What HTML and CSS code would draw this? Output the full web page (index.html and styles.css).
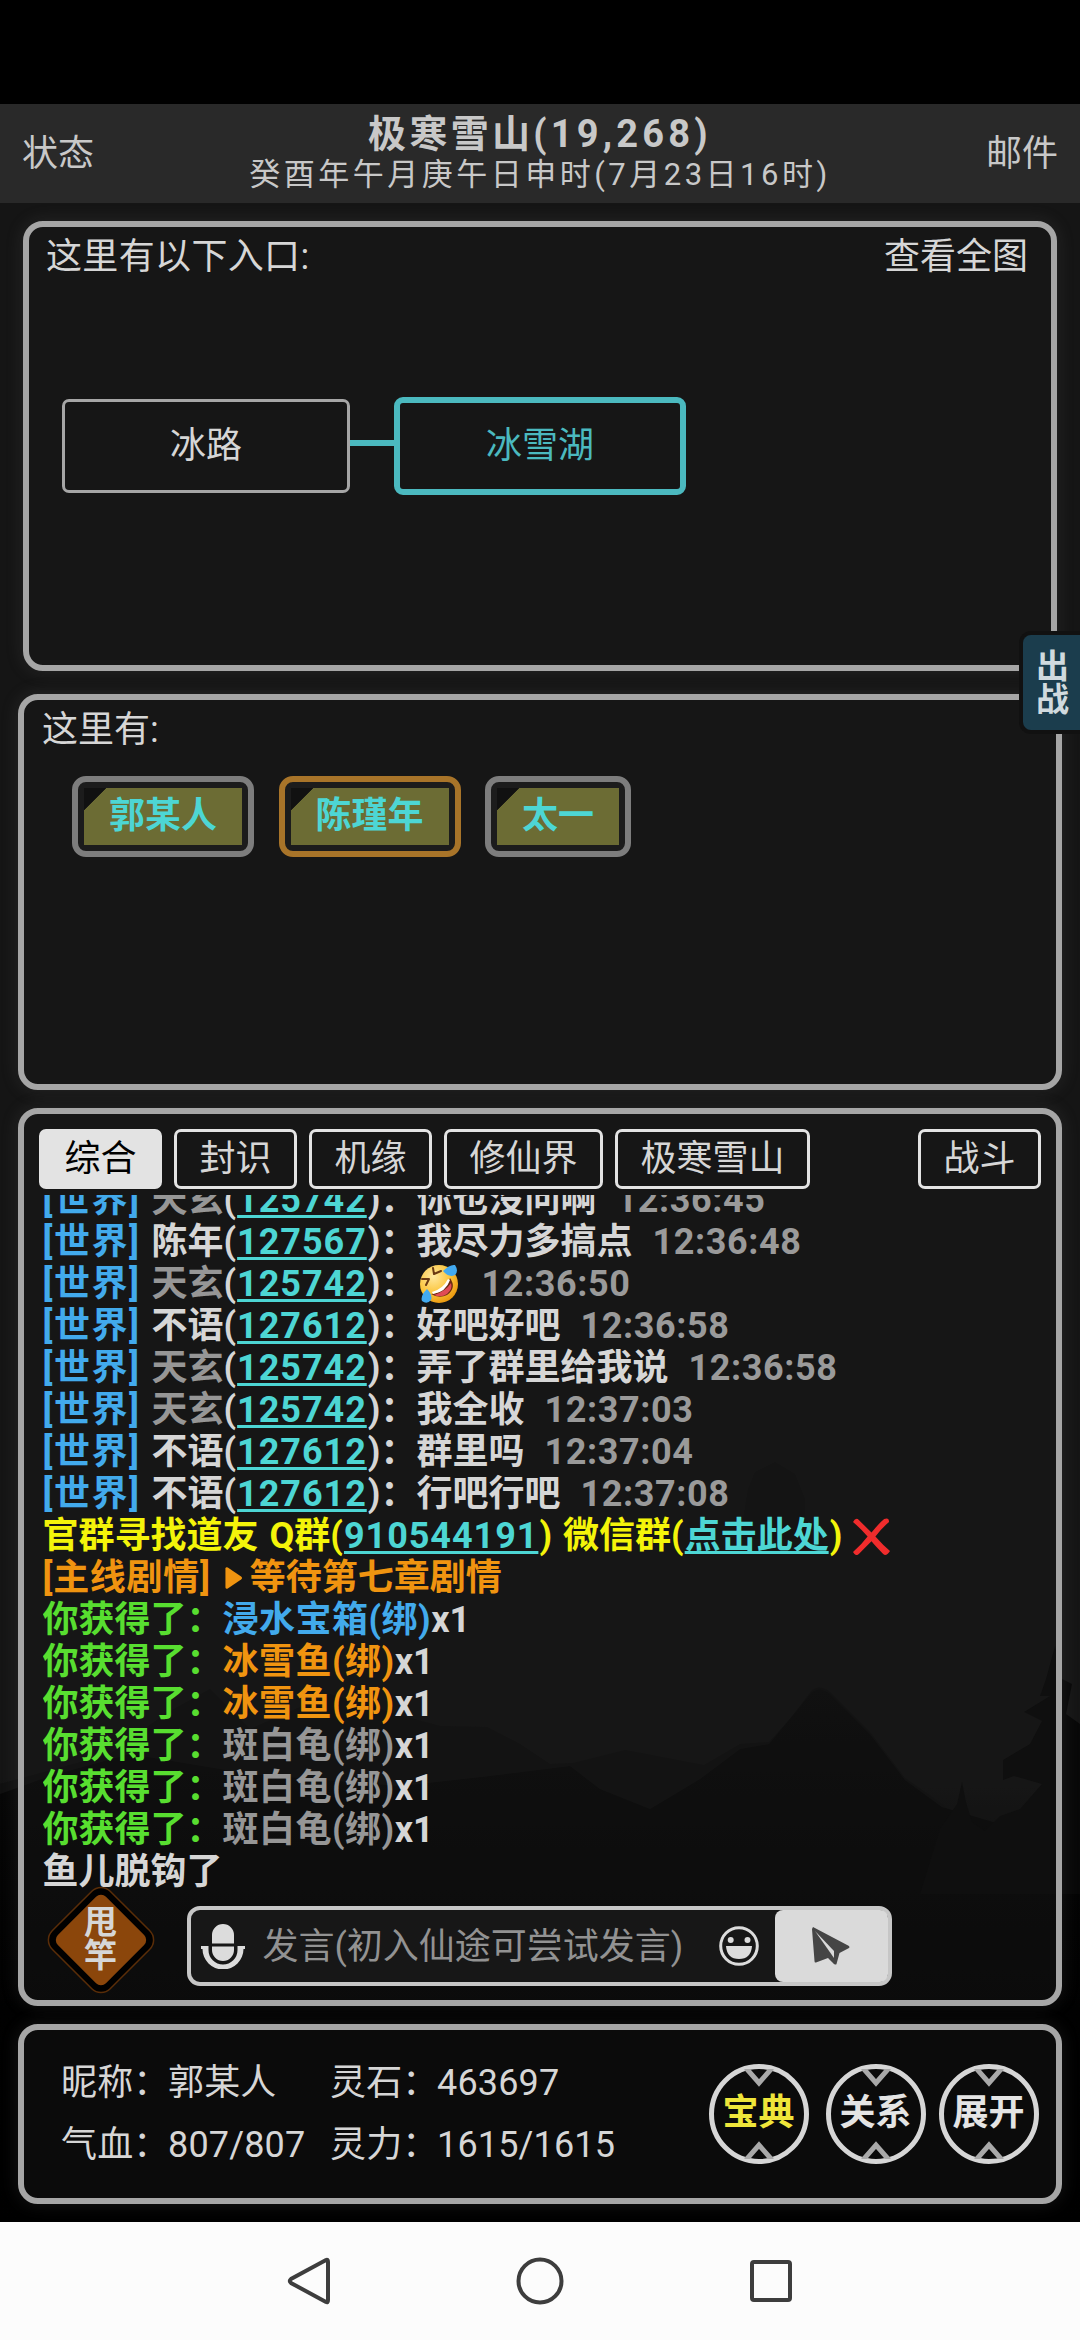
FILE: index.html
```html
<!DOCTYPE html>
<html lang="zh-CN">
<head>
<meta charset="utf-8">
<title>极寒雪山</title>
<link rel="stylesheet" href="styles.css">
</head>
<body>
<svg class="scenery" viewBox="0 0 1080 2118" aria-hidden="true">
  <defs>
    <linearGradient id="sky" x1="0" y1="0" x2="0" y2="1">
      <stop offset="0" stop-color="#151515"/><stop offset=".79" stop-color="#151515"/><stop offset=".86" stop-color="#060606"/><stop offset="1" stop-color="#000"/>
    </linearGradient>
    <linearGradient id="ridge" x1="0" y1="0" x2="0" y2="1">
      <stop offset="0" stop-color="#0b0b0b"/><stop offset=".3" stop-color="#050505"/><stop offset=".6" stop-color="#010101"/><stop offset="1" stop-color="#000"/>
    </linearGradient>
  </defs>
  <rect width="1080" height="2118" fill="url(#sky)"/>
  <path fill="#101010" d="M0 1680 110 1650 165 1610 210 1585 250 1625 330 1590 400 1611 440 1622 487 1623 520 1640 550 1660 573 1659 625 1646 704 1661 740 1640 769 1638 790 1615 812 1586Q820 1580 830 1588L870 1628 905 1674 942 1700 1000 1750 1080 1740V2118H0Z"/>
  <path fill="url(#ridge)" d="M0 1690 50 1672 130 1650 250 1670 400 1682 490 1672 570 1662 600 1685 650 1705 700 1675 740 1645 769 1640 812 1588Q820 1582 830 1590L870 1630 905 1676 942 1703 1000 1720 1080 1700V2118H0Z"/>
  <path fill="#080808" d="M1055 1542 1046 1575 1040 1592 1050 1592 1024 1608 1042 1617 1030 1640 1003 1656V1676L1014 1672 1042 1680 1020 1705 1000 1712 985 1727 972 1718 966 1698 962 1678 957 1700 940 1725 920 1790H1080V1620L1066 1610 1072 1580 1062 1575Z"/>
  <path fill="#121212" d="M740 1435 748 1385 755 1368 775 1358 795 1370 805 1395V1435Z"/>
</svg>
<div class="screen">
  <header class="topbar">
    <span class="topbar-link">状态</span>
    <div class="topbar-center">
      <h1>极寒雪山<span>(19,268)</span></h1>
      <p>癸酉年午月庚午日申时(7月23日16时)</p>
    </div>
    <span class="topbar-link">邮件</span>
  </header>

  <section class="panel panel-map">
    <div class="map-head"><span class="map-title">这里有以下入口:</span><span>查看全图</span></div>
    <div class="map-row">
      <div class="node">冰路</div>
      <div class="edge"></div>
      <div class="node node-current">冰雪湖</div>
    </div>
  </section>

  <section class="panel panel-people">
    <div>这里有:</div>
    <div class="chips">
      <div class="chip"><span>郭某人</span></div>
      <div class="chip chip-gold"><span>陈瑾年</span></div>
      <div class="chip"><span>太一</span></div>
    </div>
  </section>

  <section class="panel panel-chat">
    <nav class="tabs">
      <span class="tab tab-active">综合</span><span class="tab">封识</span><span class="tab">机缘</span><span class="tab">修仙界</span><span class="tab">极寒雪山</span><span class="tab tab-end">战斗</span>
    </nav>
    <div class="log">
      <div class="line"><span class="tag">[世界]</span><span class="gray">天玄</span>(<a>125742</a>)：<span>你也没问啊</span><time>12:36:45</time></div>
      <div class="line"><span class="tag">[世界]</span><span>陈年</span>(<a>127567</a>)：<span>我尽力多搞点</span><time>12:36:48</time></div>
      <div class="line"><span class="tag">[世界]</span><span class="gray">天玄</span>(<a>125742</a>)：<svg class="laugh" viewBox="0 0 40 42"><defs><radialGradient id="face" cx=".35" cy=".3" r=".8"><stop offset="0" stop-color="#ffe9a0"/><stop offset=".55" stop-color="#fbc53c"/><stop offset="1" stop-color="#e89006"/></radialGradient></defs><circle cx="20" cy="21" r="19" fill="url(#face)"/><path fill="#6b2a12" d="M12 31Q26 30 31 15Q38 25 28 32Q20 36 12 31Z"/><path fill="#e04b55" d="M15 32Q27 28 32 20Q34 26 28 31Q22 35 15 32Z"/><path fill="#fff" d="M13 29Q24 26 29 16L31 17Q27 29 14 31Z"/><path fill="none" stroke="#6b3a12" stroke-width="2" stroke-linecap="round" stroke-linejoin="round" d="M14 5 15 11 22 8M3 16 10 16 7 22"/><path fill="#42aaf0" d="M24 8Q31 1 36 2Q40 8 36 12Q30 15 24 8ZM8 26Q1 33 3 38Q8 42 12 37Q14 32 8 26Z"/></svg><time>12:36:50</time></div>
      <div class="line"><span class="tag">[世界]</span><span>不语</span>(<a>127612</a>)：<span>好吧好吧</span><time>12:36:58</time></div>
      <div class="line"><span class="tag">[世界]</span><span class="gray">天玄</span>(<a>125742</a>)：<span>弄了群里给我说</span><time>12:36:58</time></div>
      <div class="line"><span class="tag">[世界]</span><span class="gray">天玄</span>(<a>125742</a>)：<span>我全收</span><time>12:37:03</time></div>
      <div class="line"><span class="tag">[世界]</span><span>不语</span>(<a>127612</a>)：<span>群里吗</span><time>12:37:04</time></div>
      <div class="line"><span class="tag">[世界]</span><span>不语</span>(<a>127612</a>)：<span>行吧行吧</span><time>12:37:08</time></div>
      <div class="line yellow">官群寻找道友<span class="word">Q群</span>(<a>910544191</a>)<span class="word">微信群</span>(<a class="cn">点击此处</a>)<svg class="cross" viewBox="0 0 38 38"><path fill="#f02c2c" d="M0 4Q3-1 6 2Q14 10 19 15Q27 5 32 1Q37-1 37 4Q29 11 23 19Q31 28 38 34Q34 40 31 37Q23 29 19 24Q13 30 6 37Q3 40 0 35Q9 27 15 19Q8 11 0 4Z"/></svg></div>
      <div class="line orange"><span class="story">[主线剧情]</span><svg class="play" viewBox="0 0 20 24"><path d="M1.500 2Q2 0 4 1L18 10.500Q20 12 18 13.500L4 23Q2 24 1.500 22Z"/></svg>等待第七章剧情</div>
      <div class="line"><span class="green">你获得了：</span><span class="item blue">浸水宝箱(绑)</span>x1</div>
      <div class="line"><span class="green">你获得了：</span><span class="item orange">冰雪鱼(绑)</span>x1</div>
      <div class="line"><span class="green">你获得了：</span><span class="item orange">冰雪鱼(绑)</span>x1</div>
      <div class="line"><span class="green">你获得了：</span><span class="item gray">斑白龟(绑)</span>x1</div>
      <div class="line"><span class="green">你获得了：</span><span class="item gray">斑白龟(绑)</span>x1</div>
      <div class="line"><span class="green">你获得了：</span><span class="item gray">斑白龟(绑)</span>x1</div>
      <div class="line">鱼儿脱钩了</div>
    </div>
    <div class="composer">
      <div class="rod">
        <svg viewBox="0 0 112 112"><rect x="15" y="15" width="82" height="82" rx="13" transform="rotate(45 56 56)" class="rod-glow"/><rect x="22" y="22" width="68" height="68" rx="7" transform="rotate(45 56 56)" class="rod-fill"/></svg>
        <span>甩<br>竿</span>
      </div>
      <div class="input">
        <svg class="mic" viewBox="0 0 46 46"><path d="M12 20.500V12a11 11 0 0 1 22 0v8.500ZM12 23.500h22V27a11 11 0 0 1-22 0ZM1 23h7.500v4a14.500 14.500 0 0 0 29 0v-4H45v3h-1.500a20.500 20.500 0 0 1-41 0H1Z"/></svg>
        <span class="placeholder">发言(初入仙途可尝试发言)</span>
        <svg class="smile" viewBox="0 0 40 40"><circle cx="20" cy="20" r="18.300"/><circle class="solid" cx="11.700" cy="14" r="3"/><circle class="solid" cx="28.500" cy="14" r="3"/><path class="solid" d="M7 20H33Q32 33 20 33Q8 33 7 20Z"/></svg>
        <div class="send"><svg viewBox="0 0 38 38"><path d="M1 0 37 19Q38 20.500 37 21L27.500 26 24.500 37Q24 38 22 37L16 31 4 35.500Q2.500 36 2.500 34L0 2Z"/><path class="fold" d="M3 4 22 24 22 31Z"/></svg></div>
      </div>
    </div>
  </section>

  <section class="panel panel-status">
    <div class="stats">
      <span>昵称：</span><span>郭某人</span><span>灵石：</span><span>463697</span>
      <span>气血：</span><span>807/807</span><span>灵力：</span><span>1615/1615</span>
    </div>
    <div class="rounds">
      <div class="round round-yellow"><svg viewBox="0 0 90 90"><path d="M32-1 45 14 58-1M32 91 45 76 58 91"/></svg><span>宝典</span></div>
      <div class="round"><svg viewBox="0 0 90 90"><path d="M32-1 45 14 58-1M32 91 45 76 58 91"/></svg><span>关系</span></div>
      <div class="round"><svg viewBox="0 0 90 90"><path d="M32-1 45 14 58-1M32 91 45 76 58 91"/></svg><span>展开</span></div>
    </div>
  </section>

  <footer class="sysnav">
    <svg viewBox="0 0 44 50"><path d="M39 4Q41 3 41 6V44Q41 47 39 46L4 27Q1.500 25 4 23Z"/></svg>
    <svg viewBox="0 0 50 50"><circle cx="25" cy="25" r="21.500"/></svg>
    <svg viewBox="0 0 44 44"><rect x="3" y="3" width="38" height="38" rx="2"/></svg>
  </footer>
  <div class="battle">出战</div>
</div>
</body>
</html>
```
FILE: styles.css
```css
* { box-sizing: border-box; }
body {
  margin: 0;
  width: 1080px;
  height: 2340px;
  overflow: hidden;
  background: #000;
  color: #d6d6d6;
  font: 36px/42px Roboto, "Noto Sans CJK SC", sans-serif;
  position: relative;
}
svg { display: block; flex: none; }
h1, p { margin: 0; }
.scenery { position: absolute; top: 104px; left: 0; width: 1080px; height: 2118px; }
.screen {
  position: relative;
  height: 2340px;
  padding-top: 104px;
  display: flex;
  flex-direction: column;
  white-space: nowrap;
}
.topbar {
  height: 99px;
  flex: none;
  padding: 0 22px;
  display: flex;
  align-items: center;
  justify-content: space-between;
  background: #292929;
  color: #c8c8c8;
}
.topbar-center { text-align: center; padding-bottom: 1px; }
.topbar h1 { font-size: 38px; line-height: 44px; letter-spacing: 3.3px; }
.topbar h1 span { letter-spacing: 4.2px; }
.topbar p { font-size: 31px; line-height: 38px; letter-spacing: 3.500px; }

.panel {
  border: 6px solid #a6a6a6;
  border-radius: 20px;
  margin: 0 18px;
  flex: none;
  background: rgba(24, 24, 24, .45);
  box-shadow: 0 0 18px rgba(120, 120, 120, .18);
}
.panel-map { height: 450px; margin: 18px 23px 0; padding: 9px 23px 0 17px; }
.map-head { display: flex; justify-content: space-between; }
.map-title { letter-spacing: .35px; }
.map-row { display: flex; align-items: center; margin: 119px 0 0 16px; }
.node {
  width: 288px; height: 94px;
  border: 3.5px solid #a6a6a6;
  border-radius: 7px;
  display: flex; align-items: center; justify-content: center;
}
.edge { width: 44px; height: 6px; margin-top: -6px; background: #4bb9bf; }
.node-current { width: 292px; height: 98px; border: 6px solid #4bb9bf; border-radius: 9px; color: #4bb9bf; }

.panel-people { height: 396px; margin-top: 23px; padding: 9px 18px; }
.chips { display: flex; gap: 24.500px; margin: 25px 0 0 30px; }
.chip { border: 6px solid #7d7d7d; border-radius: 14px; padding: 6px; background: #1c1c1c; }
.chip-gold { border-color: #a87429; }
.chip span {
  display: block;
  height: 57px;
  line-height: 57px;
  padding: 0 25px;
  background: linear-gradient(135deg, #111 15.5px, #6c6c34 16px);
  color: #4dd6d4;
  font-weight: 700;
}

.panel-chat { height: 898px; margin-top: 18px; padding: 15px 15px 0; }
.tabs { display: flex; gap: 12px; }
.tab {
  height: 60px;
  line-height: 55px;
  border: 3px solid #e3e3e3;
  border-radius: 7px;
  padding: 0 22.500px;
}
.tab-active { background: #e3e3e3; color: #000; }
.tab-end { margin-left: auto; }
.log {
  height: 698px;
  margin: 6px 0 0 3.500px;
  overflow: hidden;
  font-weight: 700;
}
.line { height: 42px; display: flex; align-items: center; }
.line:first-child { margin-top: -16px; }
.tag { width: 109px; color: #42aaec; letter-spacing: 1.500px; }
.story { letter-spacing: .7px; }
.item { letter-spacing: .500px; }
.line a {
  color: #4dd6d4;
  letter-spacing: .95px;
  margin: 0 1px;
  text-decoration: underline;
  text-decoration-thickness: 3px;
  text-underline-offset: 3px;
  text-decoration-skip-ink: none;
}
.line .cn { letter-spacing: 0; }
.line time { color: #9a9a9a; margin-left: 20px; letter-spacing: .600px; }
.word { margin-left: 11px; }
.gray { color: #969696; }
.yellow { color: #f4f40a; }
.orange { color: #f09410; }
.green { color: #58de30; }
.blue { color: #42aaec; }
.laugh { width: 40px; height: 42px; margin-left: 3px; }
.laugh + time { margin-left: 22px; }
.cross { width: 37px; height: 37px; margin-left: 11px; }
.play { width: 19px; height: 24px; margin: 0 7px 0 13px; fill: #f09410; }

.composer { display: flex; }
.rod { position: relative; width: 112px; height: 112px; margin: -9px 0 0 5.500px; }
.rod svg { width: 112px; height: 112px; }
.rod-glow { fill: #000; stroke: #5a2d08; stroke-width: 1.500px; }
.rod-fill { fill: #8b460b; }
.rod span {
  position: absolute; inset: 22px 0 0;
  text-align: center;
  font-size: 33px; line-height: 33px; font-weight: 700;
}
.input {
  width: 705px; height: 80px;
  margin: 13px 0 0 30px;
  border: 4px solid #c6c6c6;
  border-radius: 13px;
  background: #171717;
  display: flex; align-items: center;
}
.mic { width: 46px; height: 46px; margin-left: 9px; fill: #dcdcdc; }
.placeholder { color: #929292; width: 456px; margin-left: 17px; padding-top: 2px; }
.smile { width: 40px; height: 40px; fill: none; stroke: #dcdcdc; stroke-width: 3; }
.smile .solid { fill: #dcdcdc; stroke: none; }
.send {
  width: 113px; height: 72px; margin-left: auto;
  border-radius: 8px;
  background: #dadada;
  display: flex; align-items: center; justify-content: center;
}
.send svg { width: 38px; height: 38px; fill: #454545; }
.send .fold { fill: #dadada; }

.panel-status {
  height: 180px; margin-top: 18px;
  padding: 0 17.500px 0 37px;
  display: flex; align-items: center; justify-content: space-between;
}
.stats {
  display: grid;
  grid-template-columns: 107px 162px 107px auto;
  row-gap: 20px;
  letter-spacing: .15px;
  margin-top: -1px;
}
.rounds { display: flex; gap: 13px; }
.round {
  position: relative;
  width: 100px; height: 100px;
  border: 5px solid #d6d6d6;
  border-radius: 50%;
  display: flex; align-items: center; justify-content: center;
  font-weight: 700;
  color: #e4e4e4;
}
.round:first-child { margin-right: 4px; }
.round svg { position: absolute; inset: 0; fill: none; stroke: #a9a9a9; stroke-width: 5; }
.round span { margin-top: -2px; }
.round-yellow { color: #efe63a; }

.sysnav {
  height: 118px;
  margin-top: 18px;
  background: #fcfcfc;
  display: flex; align-items: center; justify-content: center;
  gap: 184px;
}
.sysnav svg { height: 50px; fill: none; stroke: #3d3d3d; stroke-width: 4; }
.sysnav svg:last-child { height: 44px; }
.battle {
  position: absolute; right: 0; top: 631px;
  width: 61px; height: 103px;
  padding: 15px 10px 0 13px;
  border: 4px solid #111;
  border-right: 0;
  border-radius: 12px 0 0 12px;
  background: #1b3d4d;
  font-size: 33px; line-height: 33px; font-weight: 700;
  white-space: normal;
  color: #d0dade;
}
```
